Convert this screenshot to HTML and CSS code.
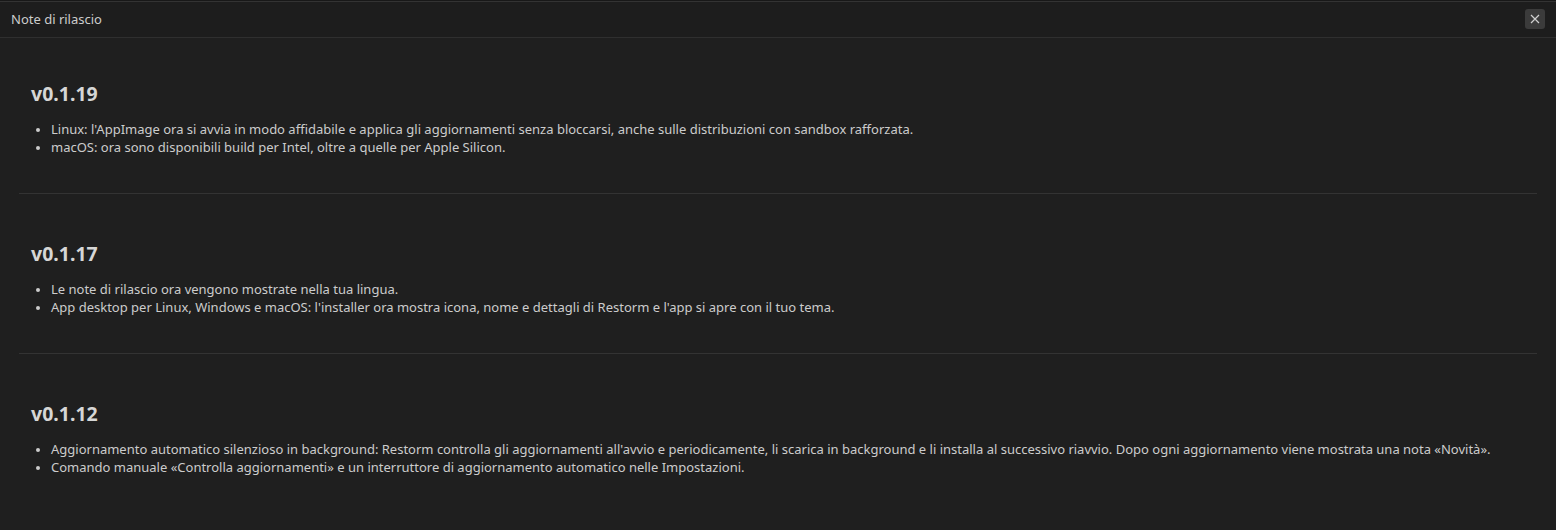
FILE: index.html
```html
<!DOCTYPE html>
<html lang="it">
<head>
<meta charset="utf-8">
<title>Note di rilascio</title>
<link rel="stylesheet" href="styles.css">
</head>
<body>
<div class="dialog">
  <header class="titlebar">
    <span class="title">Note di rilascio</span>
    <button class="close" aria-label="Chiudi">
      <svg width="10" height="10" viewBox="0 0 10 10"><path d="M1 1L9 9M9 1L1 9" stroke="#d0d0d0" stroke-width="1.2" fill="none"/></svg>
    </button>
  </header>
  <main class="content">
    <section class="release">
      <h2>v0.1.19</h2>
      <ul>
        <li>Linux: l'AppImage ora si avvia in modo affidabile e applica gli aggiornamenti senza bloccarsi, anche sulle distribuzioni con sandbox rafforzata.</li>
        <li>macOS: ora sono disponibili build per Intel, oltre a quelle per Apple Silicon.</li>
      </ul>
    </section>
    <section class="release">
      <h2>v0.1.17</h2>
      <ul>
        <li>Le note di rilascio ora vengono mostrate nella tua lingua.</li>
        <li>App desktop per Linux, Windows e macOS: l'installer ora mostra icona, nome e dettagli di Restorm e l'app si apre con il tuo tema.</li>
      </ul>
    </section>
    <section class="release last">
      <h2>v0.1.12</h2>
      <ul>
        <li>Aggiornamento automatico silenzioso in background: Restorm controlla gli aggiornamenti all'avvio e periodicamente, li scarica in background e li installa al successivo riavvio. Dopo ogni aggiornamento viene mostrata una nota «Novità».</li>
        <li>Comando manuale «Controlla aggiornamenti» e un interruttore di aggiornamento automatico nelle Impostazioni.</li>
      </ul>
    </section>
  </main>
</div>
</body>
</html>
```

FILE: styles.css
```css
html, body {
  margin: 0;
  padding: 0;
  height: 100%;
  background: #1f1f1f;
}
body {
  font-family: "Noto Sans", "Open Sans", sans-serif;
  color: #cccccc;
  overflow: hidden;
}
.dialog {
  height: 100%;
  box-sizing: border-box;
  border-top: 1px solid #181818;
  background: #1f1f1f;
}
.titlebar {
  height: 33px;
  padding: 0 11px 2px;
  border-top: 1px solid #333333;
  border-bottom: 1px solid #2f2f2f;
  background: #1d1d1d;
  display: flex;
  align-items: center;
  justify-content: space-between;
}
.title {
  font-size: 13px;
  color: #cccccc;
}
.close {
  width: 20px;
  height: 20px;
  padding: 0;
  border: none;
  border-radius: 3px;
  background: #3b3b3b;
  display: flex;
  align-items: center;
  justify-content: center;
  cursor: pointer;
}
.content {
  padding: 20px 19px 0;
}
.release {
  padding: 24px 12px 37px;
  border-bottom: 1px solid #333333;
}
.release + .release {
  padding-top: 48px;
}
.release.last {
  border-bottom: none;
}
h2 {
  margin: 0 0 14px;
  font-size: 19.5px;
  line-height: 24px;
  font-weight: 700;
  color: #d6d6d6;
}
ul {
  margin: 0;
  padding-left: 20px;
  font-size: 13px;
  line-height: 18px;
  color: #cccccc;
}
li::marker {
  font-size: 12px;
}
```
